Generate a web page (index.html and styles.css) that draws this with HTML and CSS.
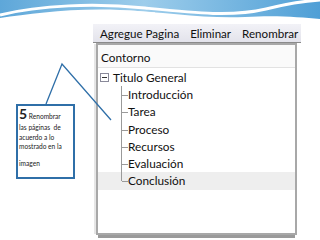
FILE: index.html
```html
<!DOCTYPE html>
<html>
<head>
<meta charset="utf-8">
<link rel="stylesheet" href="styles.css">
</head>
<body>
<div class="page">
  <svg class="wave" width="320" height="24" viewBox="0 0 320 24">
    <defs>
      <linearGradient id="g1" x1="0" y1="0" x2="1" y2="0">
        <stop offset="0" stop-color="#5ea7d9"/>
        <stop offset="0.45" stop-color="#9dcdeb"/>
        <stop offset="1" stop-color="#4f9fd6"/>
      </linearGradient>
    </defs>
    <path d="M0 0 H320 V19 C300 17 275 15 245 17 C205 19 165 12 120 10 C70 8 30 14 0 18 Z" fill="url(#g1)"/>
    <path d="M0 15 C40 5 95 3 145 8 C195 13 232 17 266 9 C286 4 305 1 320 0" stroke="#ffffff" stroke-width="3" fill="none"/>
    <path d="M15 21 C60 10 110 9 155 13" stroke="#ffffff" stroke-width="1.5" fill="none" opacity="0.85"/>
  </svg>
  <div class="main">
    <div class="left">
      <div class="callout">
        <p class="c1"><b class="num">5</b> Renombrar</p>
        <p>las páginas&nbsp; de</p>
        <p>acuerdo a lo</p>
        <p>mostrado en la</p>
        <p class="gap">imagen</p>
      </div>
    </div>
    <div class="right">
      <div class="menubar">
        <span>Agregue Pagina</span>
        <span>Eliminar</span>
        <span>Renombrar</span>
      </div>
      <div class="panel">
        <div class="phead">Contorno</div>
        <div class="tree">
          <div class="root"><span class="box"></span>Titulo General</div>
          <div class="children">
            <div class="item">Introducción</div>
            <div class="item">Tarea</div>
            <div class="item">Proceso</div>
            <div class="item">Recursos</div>
            <div class="item">Evaluación</div>
            <div class="item sel">Conclusión</div>
          </div>
        </div>
      </div>
    </div>
  </div>
  <svg class="lines" width="320" height="240" viewBox="0 0 320 240">
    <polyline points="46,104 62,64 111,120" fill="none" stroke="#2f6fa8" stroke-width="1.3"/>
  </svg>
</div>
</body>
</html>
```
FILE: styles.css
```css
html, body {
  margin: 0;
  padding: 0;
  background: #ffffff;
}
.page {
  position: relative;
  width: 320px;
  height: 240px;
  overflow: hidden;
  font-family: Lato, "Open Sans", sans-serif;
}
.wave {
  display: block;
}
.main {
  display: flex;
}
.left {
  padding-left: 16px;
  width: 77px;
}
.callout {
  margin-top: 80px;
  width: 54px;
  height: 70px;
  border: 2px solid #2f6fa8;
  padding: 1px 0 0 1px;
  font-size: 6.6px;
  color: #222;
  line-height: 9.5px;
}
.callout p {
  margin: 0;
  white-space: nowrap;
}
.callout .c1 {
  line-height: 14px;
}
.num {
  font-size: 14px;
  font-weight: 700;
}
.callout .gap {
  margin-top: 7px;
}
.right {
  width: 208px;
}
.menubar {
  height: 18px;
  border-bottom: 1px solid #8a8a8a;
  background: linear-gradient(#f2f2f7, #e3e3eb);
  display: flex;
  gap: 11px;
  padding-left: 7px;
  align-items: center;
  font-size: 11.6px;
  color: #111;
  white-space: nowrap;
}
.panel {
  margin-left: 3px;
  width: 197px;
  height: 188px;
  border: 2px solid #a8a8a8;
  box-shadow: -3px 0 0 -1px #e6e6e6, 0 5px 0 -2px #9a9a9a;
  background: #fff;
}
.phead {
  height: 22px;
  line-height: 26px;
  padding-left: 3px;
  font-size: 11.8px;
  color: #111;
  background: #fafafa;
  border-bottom: 1px solid #e2e2e2;
}
.tree {
  font-size: 11.8px;
  color: #111;
  padding-top: 1px;
}
.root {
  height: 17px;
  line-height: 17px;
  display: flex;
  align-items: center;
  padding-left: 2px;
}
.box {
  width: 7px;
  height: 7px;
  border: 1px solid #8a8a9a;
  margin-right: 4px;
  position: relative;
  background: #fff;
}
.box::after {
  content: "";
  position: absolute;
  left: 1px;
  top: 3px;
  width: 5px;
  height: 1px;
  background: #333;
}
.item {
  height: 17.3px;
  line-height: 17px;
  padding-left: 30px;
  position: relative;
}
.item::before {
  content: "";
  position: absolute;
  left: 23px;
  top: 0;
  height: 100%;
  border-left: 1px solid #9a9a9a;
}
.item::after {
  content: "";
  position: absolute;
  left: 24px;
  top: 9px;
  width: 6px;
  border-top: 1px solid #9a9a9a;
}
.item.sel {
  background: #eeeeee;
}
.item.sel::before {
  height: 9px;
}
.lines {
  position: absolute;
  left: 0;
  top: 0;
  pointer-events: none;
}
```
